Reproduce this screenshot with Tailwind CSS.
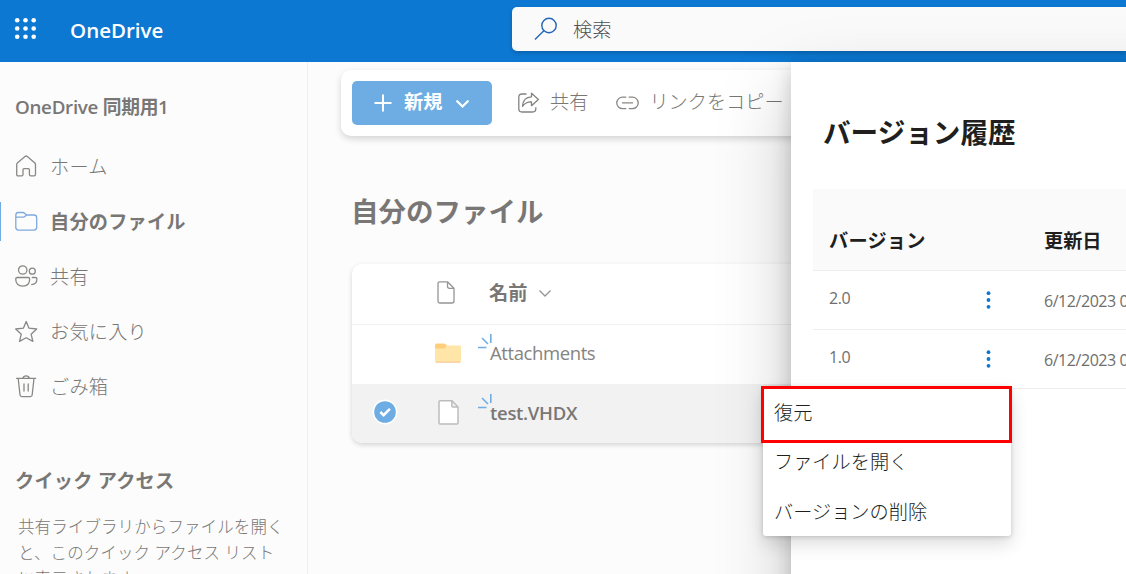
<!DOCTYPE html>
<html lang="ja">
<head>
    <meta charset="UTF-8">
    <meta name="viewport" content="width=device-width, initial-scale=1.0">
    <title>OneDrive</title>
    <script src="https://cdn.jsdelivr.net/npm/@tailwindcss/browser@4"></script>
</head>
<body class="h-[574px] w-[1126px] overflow-hidden bg-[#fcfcfc] font-['Open_Sans','Noto_Sans_CJK_JP',sans-serif] text-[19.2px] leading-[26px] text-[#797775] whitespace-nowrap">
    <div class="relative flex h-full flex-col overflow-hidden">
        <!-- Top bar -->
        <header class="flex h-[62px] shrink-0 items-start bg-[#0c78d2]">
            <svg class="mt-[17px] ml-[14px] size-[23px] shrink-0" viewBox="0 0 23 23" fill="#fff">
                <circle cx="3.2" cy="3.2" r="2.3"/><circle cx="11.5" cy="3.2" r="2.3"/><circle cx="19.7" cy="3.2" r="2.3"/>
                <circle cx="3.2" cy="11.5" r="2.3"/><circle cx="11.5" cy="11.5" r="2.3"/><circle cx="19.7" cy="11.5" r="2.3"/>
                <circle cx="3.2" cy="19.7" r="2.3"/><circle cx="11.5" cy="19.7" r="2.3"/><circle cx="19.7" cy="19.7" r="2.3"/>
            </svg>
            <div class="mt-[17px] ml-[33px] w-[442px] text-[20.5px] font-semibold text-white">OneDrive</div>
            <div class="mt-[7px] flex h-11 flex-1 items-center rounded-l-[5px] bg-[#fafafa] shadow-[0_2px_4px_rgba(0,0,0,0.2)]">
                <svg class="ml-[22px] size-6 shrink-0" viewBox="0 0 24 24" fill="none" stroke="#2466b5" stroke-width="1.4">
                    <circle cx="15" cy="8.5" r="7.2"/><path d="M9.8 13.7 1 22.5"/>
                </svg>
                <span class="mt-0.5 ml-[15px] font-light text-[#505050]">検索</span>
            </div>
        </header>

        <div class="flex min-h-0 flex-1">
            <!-- Left navigation -->
            <nav class="w-[308px] shrink-0 border-r border-[#eeeeee] pt-8">
                <div class="pl-[15px] text-[18.8px] font-semibold tracking-[-0.3px]">OneDrive 同期用1</div>
                <ul class="mt-[19px] font-light tracking-[0.2px]">
                    <li class="flex h-[55px] items-center gap-[12px] pl-[15px]">
                        <svg class="size-[23px]" viewBox="0 0 23 23" fill="none" stroke="#8a8886" stroke-width="1.3" stroke-linejoin="round">
                            <path d="M1.7 9.8c0-.8.3-1.5.9-2L10 1.5c.8-.7 1.5-.7 2.3 0l7.3 6.3c.6.5.9 1.2.9 2v9.7c0 .8-.5 1.3-1.3 1.3h-3.5c-.8 0-1.3-.5-1.3-1.3v-4.8c0-.6-.4-1-1-1H9c-.6 0-1 .4-1 1v4.8c0 .8-.5 1.3-1.3 1.3H3c-.8 0-1.3-.5-1.3-1.3z"/>
                        </svg>
                        <span>ホーム</span>
                    </li>
                    <li class="flex h-[55px] items-center">
                        <span class="h-[39px] w-px bg-[#6fade2]"></span>
                        <svg class="ml-[14px] size-[23px]" viewBox="0 0 23 23" fill="none" stroke="#81a8de" stroke-width="1.3" stroke-linejoin="round">
                            <path d="M.8 5.2c0-1.8 1-2.7 2.700-2.700h4.300c.8 0 1.300.2 1.800.7L11.500 5h7.400c1.800 0 2.800 1 2.800 2.700v9.600c0 1.800-1 2.800-2.800 2.800H3.500c-1.800 0-2.700-1-2.700-2.800zM.8 7.200h7c.8 0 1.300-.2 1.800-.7l2-1.400"/>
                        </svg>
                        <span class="ml-[12px] font-bold">自分のファイル</span>
                    </li>
                    <li class="flex h-[55px] items-center gap-[12px] pl-[15px]">
                        <svg class="size-[23px]" viewBox="0 0 23 23" fill="none" stroke="#8a8886" stroke-width="1.3" stroke-linejoin="round">
                            <circle cx="7.7" cy="5" r="4.2"/><circle cx="17.3" cy="6.2" r="3"/>
                            <path d="M2.4 12.500h10.700c1 0 1.600.6 1.600 1.600 0 4.200-2.600 7-7 7s-7-2.800-7-7c0-1 .7-1.600 1.700-1.600zM16.800 12.500h3.600c1 0 1.500.6 1.500 1.600 0 3.500-2.100 5.500-5.700 5.500"/>
                        </svg>
                        <span>共有</span>
                    </li>
                    <li class="flex h-[55px] items-center gap-[12px] pl-[15px]">
                        <svg class="size-[23px]" viewBox="0 0 23 23" fill="none" stroke="#8a8886" stroke-width="1.3" stroke-linejoin="round">
                            <path d="m11.2 1.5 2.8 6.7 7.7.8-5.6 5.2 1.8 7.2-6.7-3.6-6.7 3.6 1.8-7.2L.7 9l7.7-.8z"/>
                        </svg>
                        <span>お気に入り</span>
                    </li>
                    <li class="flex h-[55px] items-center gap-[12px] pl-[15px]">
                        <svg class="size-[23px]" viewBox="0 0 23 23" fill="none" stroke="#8a8886" stroke-width="1.3" stroke-linecap="round">
                            <path d="M1.5 3.3h19.2M8 3c.3-1.5 1.3-2.2 3.1-2.2S13.9 1.5 14.200 3M3.200 3.500 5 19.800c.1 1.200.7 1.800 1.900 1.800h8.400c1.200 0 1.800-.6 1.900-1.800L19 3.500M9 9v7M13.200 9v7"/>
                        </svg>
                        <span>ごみ箱</span>
                    </li>
                </ul>
                <div class="mt-[54px] pl-[15px] font-bold tracking-[0.2px]">クイック アクセス</div>
                <p class="mt-5 pl-[18px] text-[16.5px] font-light tracking-[0.1px]">共有ライブラリからファイルを開く<br>と、このクイック アクセス リスト<br>に表示されます。</p>
            </nav>

            <!-- File list -->
            <main class="flex-1 pt-2 pl-[33px]">
                <div class="flex h-[66px] items-center rounded-l-[10px] bg-white pl-[11px] font-light shadow-[0_3px_7px_rgba(0,0,0,0.16)]">
                    <button class="flex h-11 w-[140px] shrink-0 items-center rounded-[5px] bg-[#6dade3] pl-[22px] font-bold text-white">
                        <svg class="size-[18px]" viewBox="0 0 18 18" fill="none" stroke="#fff" stroke-width="2"><path d="M9 .5v17M.5 9h17"/></svg>
                        <span class="-mt-0.5 ml-3">新規</span>
                        <svg class="mt-0.5 ml-[14px] h-2 w-[13px]" viewBox="0 0 13 8" fill="none" stroke="#fff" stroke-width="2.2" stroke-linecap="round"><path d="m1.2 1.2 5.3 5.3 5.3-5.3"/></svg>
                    </button>
                    <svg class="ml-[26px] size-[22px]" viewBox="0 0 22 22" fill="none" stroke="#858381" stroke-width="1.3" stroke-linejoin="round">
                        <path d="M8.5 2H4C2 2 .8 3.2.8 5.2v11.6c0 2 1.2 3.2 3.2 3.2h10.600c2 0 3.200-1.200 3.200-3.200v-1.500"/>
                        <path d="M13.5 1.2v3.6c-5.8.2-8.7 3.5-9 9.5 2.300-3.400 5-4.600 9-4.500v3.900l6.900-6.200z"/>
                    </svg>
                    <span class="-mt-0.5 ml-[10px]">共有</span>
                    <svg class="ml-[28px] h-[14px] w-[23px]" viewBox="0 0 23 14" fill="none" stroke="#8a8886" stroke-width="1.3" stroke-linecap="round">
                        <path d="M9.8 1.2H6.5a5.600 5.600 0 0 0 0 11.400h3.300M13.200 1.200h3.300a5.600 5.600 0 0 1 0 11.400h-3.300M6.500 6.900h10"/>
                    </svg>
                    <span class="-mt-0.5 ml-[10px]">リンクをコピー</span>
                </div>

                <h1 class="mt-[58px] ml-[10px] text-[27.5px] leading-9 font-bold">自分のファイル</h1>

                <div class="mt-[34px] ml-[11px] overflow-hidden rounded-l-[10px] bg-white shadow-[0_2px_5px_rgba(0,0,0,0.16)]">
                    <div class="flex h-[61px] items-center border-b border-[#f1f1f1]">
                        <svg class="-mt-1 ml-[85px] h-[23px] w-[18px]" viewBox="0 0 18 23" fill="none" stroke="#979593" stroke-width="1.3" stroke-linejoin="round">
                            <path d="M3 .8h7.5L17 7.3V20c0 1.3-.7 2-2 2H3c-1.3 0-2-.7-2-2V2.8c0-1.3.7-2 2-2zM10.5.8v4.5c0 1.3.7 2 2 2H17"/>
                        </svg>
                        <span class="-mt-0.5 ml-[34px] font-bold">名前</span>
                        <svg class="-mt-0.5 ml-3 h-[7px] w-3" viewBox="0 0 12 7" fill="none" stroke="#979593" stroke-width="1.3"><path d="m.5.5 5.5 5.5L11.5.5"/></svg>
                    </div>
                    <div class="flex h-[59px] items-center pb-[3px]">
                        <svg class="ml-[83px] h-5 w-[26px]" viewBox="0 0 26 20">
                            <path fill="#ffce7a" d="M0 2.500C0 1.200.9.500 2 .5h7c1 0 2 1 3 2L10 7H0z"/>
                            <path fill="#ffe6a8" d="M0 5.500h9c1.500 0 2.500-3 4-3h11.500c1 0 1.500.5 1.500 1.500v14c0 1-.5 1.500-1.500 1.500h-23C.5 19.500 0 19 0 18z"/>
                            <path fill="#f0b58a" d="M.5 18.700h25c-.3.600-.6.800-1 .8h-23c-.4 0-.7-.2-1-.8z"/>
                        </svg>
                        <svg class="-mt-[23px] ml-4 h-[15px] w-4" viewBox="0 0 16 15" fill="none" stroke="#6fade2" stroke-width="1.6"><path d="M13.8 0v9M5 4l6 6M1 13.5h8.5"/></svg>
                        <span class="-ml-[3px] text-[18.5px] tracking-[-0.4px] text-[#858381]">Attachments</span>
                    </div>
                    <div class="flex h-[59px] items-center bg-[#f2f2f2] pb-[2px]">
                        <svg class="-mt-[1px] ml-[20px] size-[26px]" viewBox="0 0 26 26" fill="none">
                            <circle cx="13" cy="13" r="12.5" fill="#fff"/><circle cx="13" cy="13" r="10.8" fill="#6dade3"/>
                            <path d="m8.300 13 3.300 3.200 6.300-6.300" stroke="#fff" stroke-width="2.5"/>
                        </svg>
                        <svg class="ml-[40px] h-[25px] w-[21px]" viewBox="0 0 21 25" fill="#fff" stroke="#bcbcbc" stroke-width="1.5" stroke-linejoin="round">
                            <path d="M2 .8h12L20 7v16c0 .7-.4 1-1 1H2c-.7 0-1-.3-1-1V1.800c0-.6.3-1 1-1zM13.800.8V6c0 .7.300 1 1 1H20"/>
                        </svg>
                        <svg class="-mt-[23px] ml-[18px] h-[15px] w-4" viewBox="0 0 16 15" fill="none" stroke="#6fade2" stroke-width="1.6"><path d="M13.8 0v9M5 4l6 6M1 13.5h8.500"/></svg>
                        <span class="-ml-[3px] text-[18.5px] font-semibold tracking-[-0.3px]">test.VHDX</span>
                    </div>
                </div>
            </main>
        </div>

        <!-- Version history panel -->
        <aside class="absolute top-[62px] left-[791px] h-[640px] w-[480px] bg-white pt-[52px] pl-[22px] text-[#201f1e] shadow-[0_30px_70px_rgba(0,0,0,0.22),0_6px_18px_rgba(0,0,0,0.18)]">
            <h2 class="pl-[10px] text-[27.6px] leading-9 font-bold">バージョン履歴</h2>
            <div class="mt-[39px]">
                <div class="flex h-[82px] items-center border-b border-[#ededed] bg-[#fafafa] pt-[22px] pl-4 font-bold">
                    <span class="w-[215px] tracking-[0.2px]">バージョン</span><span>更新日</span>
                </div>
                <div class="flex h-[59px] items-center border-b border-[#ededed] pl-4 text-[16px] text-[#706e6c]">
                    <span class="-mt-1 w-[157px] tracking-[-0.4px]">2.0</span>
                    <svg class="h-[18px] w-[5px]" viewBox="0 0 5 18" fill="#0c78d2"><circle cx="2.5" cy="2.2" r="1.9"/><circle cx="2.5" cy="9" r="1.9"/><circle cx="2.5" cy="15.8" r="1.9"/></svg>
                    <span class="ml-[53px] pt-0.5 tracking-[-0.45px]">6/12/2023 08:30</span>
                </div>
                <div class="flex h-[59px] items-center border-b border-[#ededed] pl-4 text-[16px] text-[#706e6c]">
                    <span class="-mt-1 w-[157px] tracking-[-0.4px]">1.0</span>
                    <svg class="h-[18px] w-[5px]" viewBox="0 0 5 18" fill="#0c78d2"><circle cx="2.5" cy="2.2" r="1.9"/><circle cx="2.5" cy="9" r="1.9"/><circle cx="2.5" cy="15.8" r="1.9"/></svg>
                    <span class="ml-[53px] pt-0.5 tracking-[-0.45px]">6/12/2023 08:30</span>
                </div>
            </div>
        </aside>

        <!-- Context menu -->
        <div class="absolute top-[386px] left-[761px] w-[251px] font-light text-[#201f1e]">
            <div class="mr-px ml-0.5 rounded-[3px] bg-white shadow-[0_8px_18px_rgba(0,0,0,0.14),0_1px_4px_rgba(0,0,0,0.16)]">
                <div class="-mr-px -ml-0.5 flex h-[57px] items-center border-3 border-[#fe0000] bg-white pb-[3px] pl-[10px]">復元</div>
                <div class="flex h-[39px] items-center pb-[2px] pl-[11px]">ファイルを開く</div>
                <div class="flex h-[54px] items-center pt-[5px] pl-[11px]">バージョンの削除</div>
            </div>
        </div>
    </div>
</body>
</html>
